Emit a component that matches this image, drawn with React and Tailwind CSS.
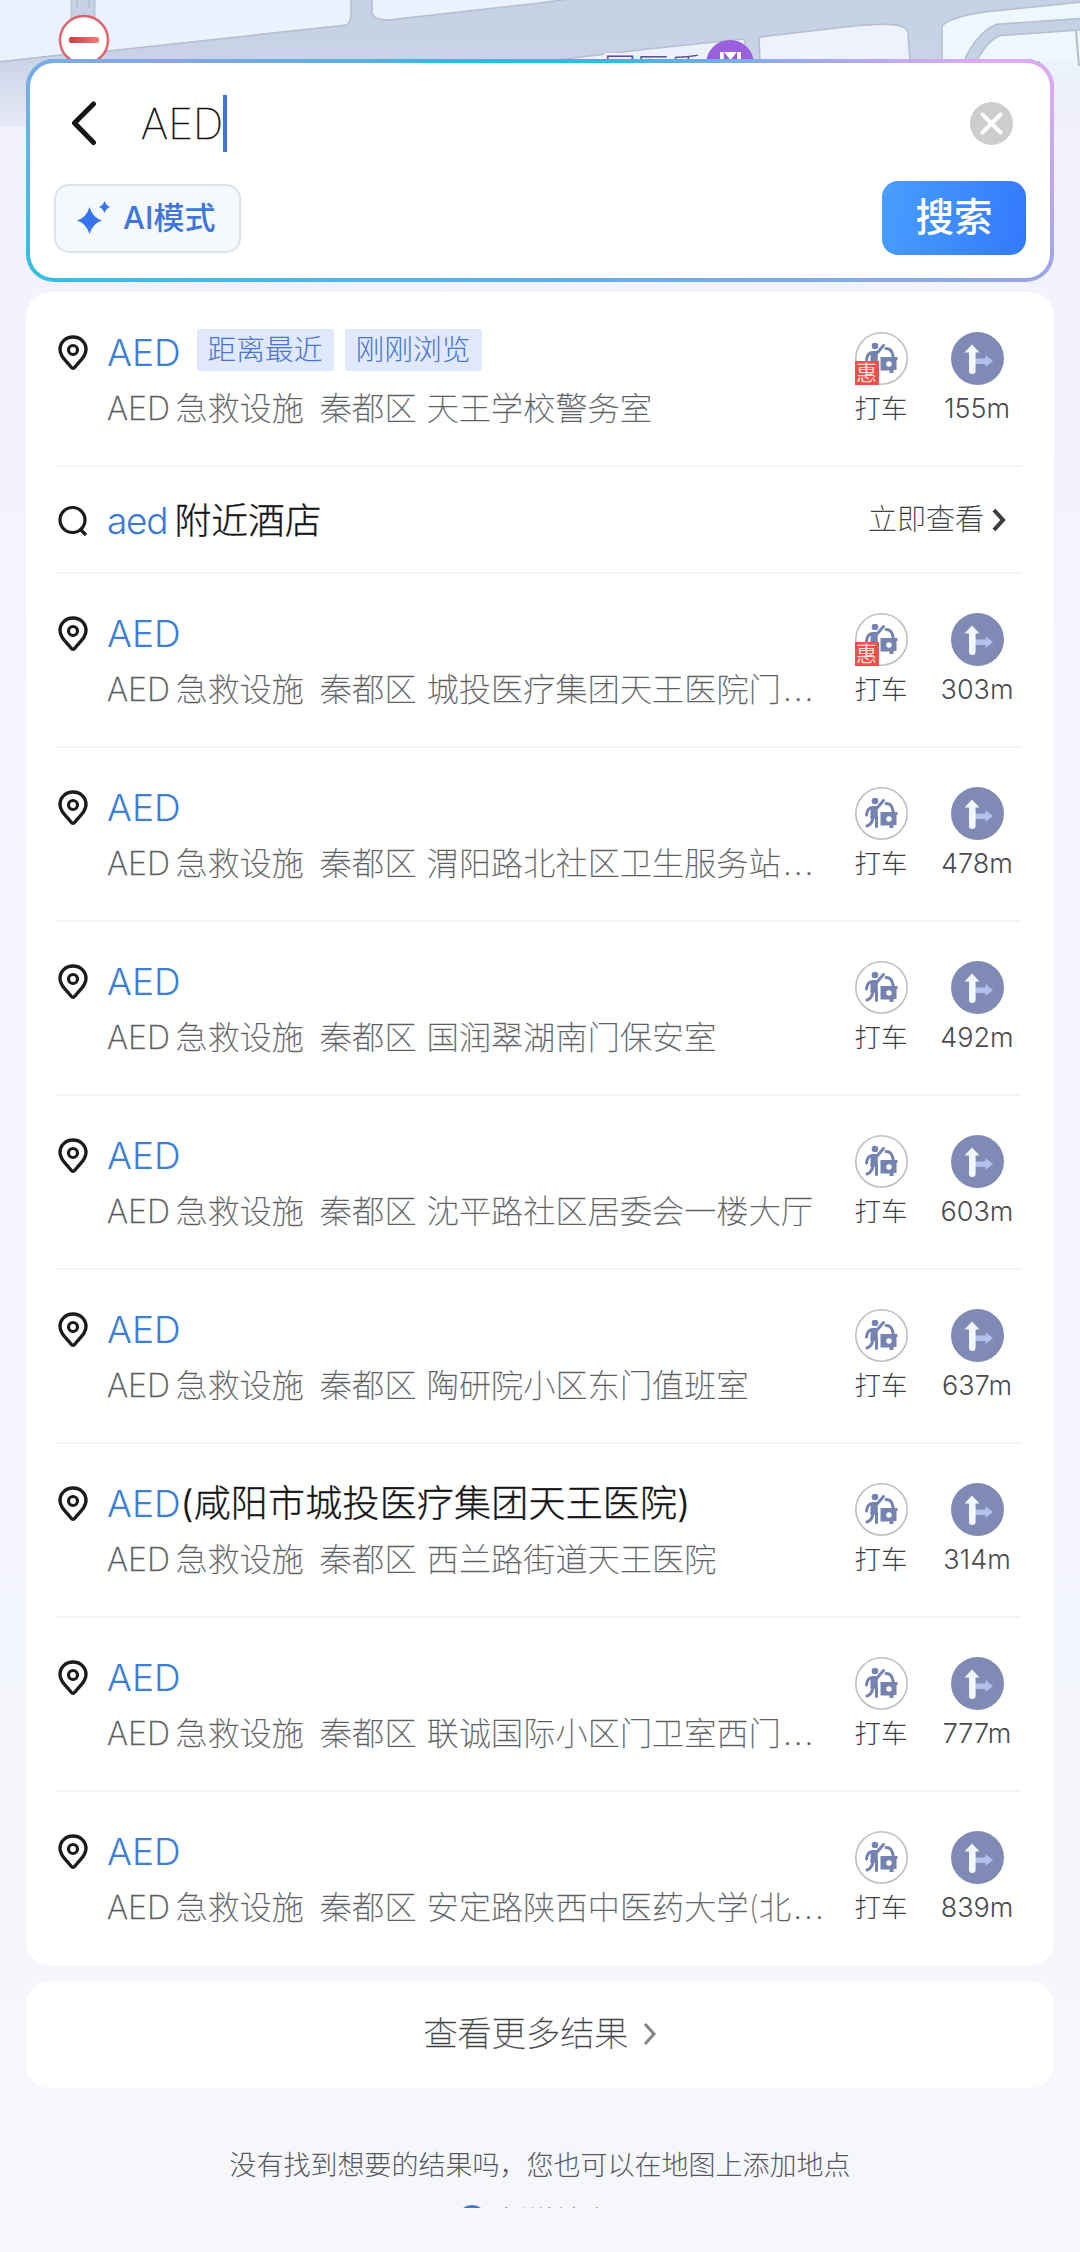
import React, { useState } from "react";

const places = [
  { address: "天王学校警务室", distance: "155m", tags: ["距离最近", "刚刚浏览"], discount: true },
  { address: "城投医疗集团天王医院门", cut: true, distance: "303m", discount: true },
  { address: "渭阳路北社区卫生服务站", cut: true, distance: "478m" },
  { address: "国润翠湖南门保安室", distance: "492m" },
  { address: "沈平路社区居委会一楼大厅", distance: "603m" },
  { address: "陶研院小区东门值班室", distance: "637m" },
  { address: "西兰路街道天王医院", distance: "314m", suffix: "(咸阳市城投医疗集团天王医院)" },
  { address: "联诚国际小区门卫室西门", cut: true, distance: "777m" },
  { address: "安定路陕西中医药大学(北", cut: true, distance: "839m" },
];

const MapBackdrop = () => (
  <svg className="absolute top-0 left-0" width="1080" height="150" viewBox="0 0 1080 150">
    <defs>
      <linearGradient id="road" x1="0" y1="0" x2="0" y2="1">
        <stop offset="0" stopColor="#c6d2e4" />
        <stop offset="0.45" stopColor="#c9d2e6" />
        <stop offset="0.95" stopColor="#e4e8f4" />
      </linearGradient>
      <linearGradient id="land" gradientUnits="userSpaceOnUse" x1="0" y1="0" x2="0" y2="126">
        <stop offset="0" stopColor="#ecf8fe" />
        <stop offset="0.5" stopColor="#ebf3fd" />
        <stop offset="1" stopColor="#f0effc" />
      </linearGradient>
      <linearGradient id="bar" x1="0" y1="0" x2="1" y2="0">
        <stop offset="0" stopColor="#cf3a3f" />
        <stop offset="1" stopColor="#ef8079" />
      </linearGradient>
    </defs>
    <rect width="1080" height="126" fill="url(#road)" />
    <g fill="#ebf2fd" stroke="#b3bece" strokeWidth="1.5">
      <path d="M-2 62 L60 55 L108 51 L347 25 Q351 21 351 14 V-2 H-2 Z" />
      <path d="M372 -2 V13 Q374 20 388 20 L540 3 L576 -2 Z" />
      <path d="M540 62 L648 49 L744 39 L749 62 Z" />
      <path d="M759 37 L845 27 Q890 22 900 26 Q908 28 908 34 L910 62 H760 Z" fill="#edf2fd" />
      <path d="M942 62 V26 Q950 17 985 12 L1082 2 V62 Z" fill="#ecf7fe" />
    </g>
    <rect x="1040" y="61" width="40" height="65" fill="url(#land)" />
    <path d="M968 66 Q980 38 998 30 L1082 24" fill="none" stroke="#b3bece" strokeWidth="13" />
    <path d="M968 66 Q980 38 998 30 L1082 24" fill="none" stroke="#c6d1e4" strokeWidth="10" />
    <path d="M1076 31 L1079 66" stroke="#b3bece" strokeWidth="2" />
    <rect x="71" y="-2" width="24" height="30" fill="#c6d2e4" stroke="#b3bece" />
    <path d="M77 0 V8 M89 0 V8" stroke="#a9b5c8" />
    <circle cx="84" cy="40" r="24" fill="#fff" stroke="#e0636b" strokeWidth="2.5" />
    <rect x="69" y="37" width="30" height="6" rx="2" fill="url(#bar)" />
    <text x="604" y="81" fontSize="32" fontWeight="300" letterSpacing="1" fill="#5b5391" stroke="#f3effc" strokeWidth="5" paintOrder="stroke">
      国医质
    </text>
    <circle cx="730" cy="64" r="24" fill="#9a5fdc" />
    <rect x="720" y="52" width="21" height="20" fill="#fff" />
    <path d="M725 66 V55 L730.500 62 L736 55 V66" fill="none" stroke="#9a5fdc" strokeWidth="2.5" />
  </svg>
);

const PinIcon = () => (
  <svg width="30" height="36" viewBox="0 0 30 36" fill="none" stroke="#1b1b1b">
    <path d="M15 2 C7.500 2 2 7.500 2 14.500 C2 19.500 5 23 10.500 29 L13 32 Q15 34.500 17 32 L19.500 29 C25 23 28 19.500 28 14.500 C28 7.500 22.500 2 15 2 Z" strokeWidth="3.400" />
    <circle cx="15" cy="15" r="4.500" strokeWidth="3.200" />
  </svg>
);

const TaxiIcon = () => (
  <svg width="53" height="53" viewBox="0 0 53 53" fill="none" strokeLinecap="round" strokeLinejoin="round">
    <circle cx="26.500" cy="26.500" r="25.700" fill="#fff" stroke="#bfbfc4" strokeWidth="1.600" />
    <circle cx="20" cy="14" r="3.300" fill="#7583b0" />
    <path d="M11.500 28 C12 23 14 20.500 18 20.500 H22.500 L28.500 13.500" stroke="#7583b0" strokeWidth="3" />
    <path d="M16.500 21 H22 V31 H16 Z" fill="#7583b0" stroke="#7583b0" strokeWidth="1.500" />
    <path d="M18 30 C17.500 35 16 37.500 12 39 M21.500 30 V39.500" stroke="#7583b0" strokeWidth="3" />
    <path d="M31 16.500 C36 16.500 37.500 20 38.500 26" stroke="#7583b0" strokeWidth="3" />
    <path d="M25.500 25 H42.500 V28 H41.500 V38 H38.500 V41 H34.500 V38.500 H25.500 Z" fill="#7583b0" />
    <circle cx="34" cy="32" r="2.700" fill="#fff" />
  </svg>
);

const RouteIcon = () => (
  <svg width="53" height="53" viewBox="0 0 53 53">
    <circle cx="26.500" cy="26.500" r="26.500" fill="#7f8bb4" />
    <path d="M24 26.500 H34.500 V23 L42 29 L34.500 35 V32 H24 Z" fill="#b4c0ec" />
    <path d="M21 12.500 L28.500 20.500 H24.600 V39 Q24.600 42 21.300 42 Q18 42 18 39 V20.500 H13.500 Z" fill="#f3f7ff" />
  </svg>
);

const Chevron = ({ className, width }) => (
  <svg className={className} width="14" height="24" viewBox="0 0 14 24" fill="none" stroke="currentColor">
    <path d="M2 2 L11 12 L2 22" strokeWidth={width} />
  </svg>
);

const PlaceRow = ({ place, last }) => (
  <li className={`h-[174px] flex pl-8 pr-[39px] relative ${last ? "" : "after:content-[''] after:absolute after:left-[30px] after:right-8 after:-bottom-px after:h-0.5 after:bg-[#f4f4f6]"}`}>
    <div className="pt-[43px] w-[49px] shrink-0">
      <PinIcon />
    </div>
    <div className="pt-[38px] flex-1 min-w-0">
      <div className="h-[46px] flex items-center text-[37px] whitespace-nowrap">
        <span className="text-[#3c7fd6] font-light">AED</span>
        {place.suffix && <span className="text-[#141414] font-light tracking-[0.2px] [-webkit-text-stroke:0.3px_#141414]">{place.suffix}</span>}
        {place.tags && (
          <div className="flex gap-[11px] ml-4 -mt-[7px]">
            {place.tags.map((tag) => (
              <span key={tag} className="w-[137px] h-[42px] flex items-center justify-center bg-[#e0e9fb] text-[#4a74cf] text-[28.8px] font-light rounded-[3px]">
                {tag}
              </span>
            ))}
          </div>
        )}
      </div>
      <div className="mt-[11px] h-11 flex items-center text-[32px] font-thin text-[#5c5f63] whitespace-nowrap [-webkit-text-stroke:0.35px_#5c5f63]">
        <span className="font-extralight">AED</span>
        <span className="ml-[6px]">急救设施</span>
        <span className="ml-4 tracking-[0.3px]">秦都区</span>
        <span className="ml-[10px] tracking-[0.2px]">
          {place.address}
          {place.cut && <span className="tracking-[2px] ml-[2px] font-extralight">...</span>}
        </span>
      </div>
    </div>
    <div className="flex pt-10 gap-5">
      <div className="w-[76px] flex flex-col items-center">
        <div className="relative">
          <TaxiIcon />
          {place.discount && (
            <span className="absolute left-0 bottom-0 size-6 bg-[#ec4f49] text-[#ffdcd8] text-[21px] leading-[23px] text-center font-normal">
              惠
            </span>
          )}
        </div>
        <span className="h-12 flex items-center text-[26.500px] font-light text-[#3e3f42]">打车</span>
      </div>
      <div className="w-[76px] flex flex-col items-center">
        <RouteIcon />
        <span className="h-12 flex items-center text-[27px] font-light text-[#4a4b4e]">{place.distance}</span>
      </div>
    </div>
  </li>
);

const HotelRow = () => (
  <li className="h-[107px] flex items-center pl-8 pr-12 pt-0.5 relative after:content-[''] after:absolute after:left-[30px] after:right-8 after:-bottom-px after:h-0.5 after:bg-[#f4f4f6]">
    <svg className="mr-[19px]" width="30" height="32" viewBox="0 0 30 32" fill="none" stroke="#1b1b1b" strokeWidth="3.200">
      <circle cx="14.500" cy="15" r="12.500" />
      <path d="M21.500 23.500 L28 30" />
    </svg>
    <span className="text-[37px] font-light text-[#3c78d6] tracking-[-1.2px]">aed</span>
    <span className="text-[36.8px] font-light text-[#141414] ml-[7px] [-webkit-text-stroke:0.3px_#141414]">附近酒店</span>
    <button className="ml-auto -mt-0.5 flex items-center text-[29px] font-thin text-[#333] [-webkit-text-stroke:0.3px_#333]">
      立即查看
      <Chevron className="ml-2 text-[#3c3c3c]" width="4" />
    </button>
  </li>
);

const SearchBox = () => {
  const [keyword, setKeyword] = useState("AED");

  return (
    <div className="relative h-[223px] p-1 rounded-[28px] bg-linear-to-r from-[#2fc0e2] via-[#5cb0e4] via-50% to-[#9aa6ea] overflow-hidden">
      {/* upper half of the border fades to pink on the right */}
      <div className="absolute inset-0 bg-[linear-gradient(90deg,#74aee8_0%,#8ba3e2_14%,#2fb9e0_45%,#3fb4e2_58%,#8fa9ea_72%,#dcaaf0_92%)] [mask-image:linear-gradient(black_15%,transparent)]" />
      <div className="relative h-full bg-white rounded-3xl px-6 pt-[18px]">
        <div className="h-[84px] flex items-center pl-[17px] pr-[13px]">
          <svg width="26" height="46" viewBox="0 0 26 46" fill="none" stroke="#151515" strokeWidth="5" strokeLinecap="round" strokeLinejoin="round">
            <path d="M22.500 4 L3.500 23 L22.500 42.500" />
          </svg>
          <div className="ml-11 flex items-center">
            <span className="text-[42px] font-thin text-[#111] tracking-[0.3px] [-webkit-text-stroke:0.7px_#111]">{keyword}</span>
            <span className="w-1 h-[57px] bg-[#3c74dc]" />
          </div>
          <button className="ml-auto" onClick={() => setKeyword("")}>
            <svg width="43" height="43" viewBox="0 0 43 43">
              <circle cx="21.500" cy="21.500" r="21.500" fill="#cccdcf" />
              <path d="M12.500 12.500 L30.500 30.500 M30.500 12.500 L12.500 30.500" stroke="#fff" strokeWidth="4" strokeLinecap="round" />
            </svg>
          </button>
        </div>
        <div className="mt-4 flex items-center justify-between">
          <button className="w-[187px] h-[69px] flex items-center pl-[21px] rounded-[15px] border-2 border-[#dbe2ee] bg-[#f5f8fd] text-[#3f76dc]">
            <svg width="34" height="34" viewBox="0 0 34 34" fill="#3775ee">
              <path d="M12.500 6 Q15.500 16.500 25 19.500 Q15.500 22.500 12.500 33 Q9.500 22.500 0 19.500 Q9.500 16.500 12.500 6 Z" />
              <path d="M27.500 0 Q29 4.500 33 6 Q29 7.500 27.500 12 Q26 7.500 22 6 Q26 4.500 27.500 0 Z" />
            </svg>
            <span className="ml-3 text-[31px] font-medium whitespace-nowrap">AI模式</span>
          </button>
          <button className="w-36 h-[74px] rounded-2xl bg-linear-100 from-[#499efd] to-[#3478fb] text-white text-[38.5px] font-medium">
            搜索
          </button>
        </div>
      </div>
    </div>
  );
};

export default function App() {
  return (
    <div className="relative w-[1080px] h-[2252px] overflow-hidden bg-linear-to-b from-[#f1f2fe] via-[#f4f5fe] via-60% to-[#f5f7fb] to-95% font-['Inter','Noto_Sans_CJK_SC',sans-serif]">
      <MapBackdrop />
      <div className="relative px-[26px] pt-[59px]">
        <SearchBox />

        <ul className="mt-2.5 bg-white rounded-3xl">
          <PlaceRow place={places[0]} />
          <HotelRow />
          {places.slice(1).map((place, i) => (
            <PlaceRow key={place.distance} place={place} last={i === places.length - 2} />
          ))}
        </ul>

        <button className="mt-4 w-full h-[107px] pb-0.5 bg-white rounded-3xl flex items-center justify-center text-[34.2px] font-thin text-[#3f4245] [-webkit-text-stroke:0.3px_#3f4245]">
          查看更多结果
          <Chevron className="ml-[14px] text-[#858585]" width="3" />
        </button>

        <p className="mt-[58px] h-10 leading-10 text-center text-[27px] font-light text-[#55585e]">
          没有找到想要的结果吗，您也可以在地图上添加地点
        </p>

        {/* next entry only peeks in above the bottom edge */}
        <div className="mt-[19px] h-[3px] overflow-hidden flex justify-center">
          <div className="flex gap-3 h-8 -ml-3">
            <span className="size-[30px] rounded-full bg-[#3c7dd0] shrink-0" />
            <span className="-mt-1 leading-10 text-[28px] font-light text-[#888]">新增地点</span>
          </div>
        </div>
      </div>
    </div>
  );
}
